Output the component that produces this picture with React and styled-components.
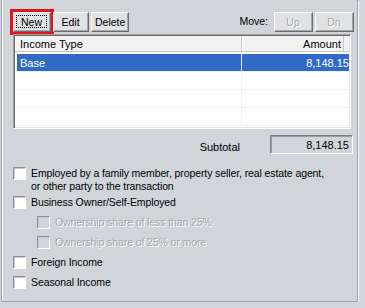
import React from 'react';
import styled, { createGlobalStyle } from 'styled-components';

const incomes = [
    { type: 'Base', amount: '8,148.15' },
    { type: '', amount: '' },
    { type: '', amount: '' },
    { type: '', amount: '' },
];

const options = [
    { label: 'Employed by a family member, property seller, real estate agent, or other party to the transaction', height: 29 },
    { label: 'Business Owner/Self-Employed' },
    { label: 'Ownership share of less than 25%', sub: true, disabled: true },
    { label: 'Ownership share of 25% or more', sub: true, disabled: true },
    { label: 'Foreign Income' },
    { label: 'Seasonal Income' },
];

const App = () => {
    return (
        <>
            <GlobalStyle />
            <Frame>
                <Toolbar>
                    <ButtonGroup>
                        <Button $w={38} $marked>
                            <Focus $focused>New</Focus>
                        </Button>
                        <Button $w={36}><Focus>Edit</Focus></Button>
                        <Button $w={38}><Focus>Delete</Focus></Button>
                    </ButtonGroup>
                    <MoveGroup>
                        <MoveLabel>Move:</MoveLabel>
                        <Button $w={39} disabled><Focus>Up</Focus></Button>
                        <Button $w={39} disabled><Focus>Dn</Focus></Button>
                    </MoveGroup>
                </Toolbar>

                <ListView>
                    <HeaderRow>
                        <HeaderCell>Income Type</HeaderCell>
                        <HeaderCell $right>Amount</HeaderCell>
                    </HeaderRow>
                    <Rows>
                        {incomes.map((item, i) => (
                            <Row key={i} $selected={i === 0}>
                                <Cell>{item.type}</Cell>
                                <Cell $right>{item.amount}</Cell>
                            </Row>
                        ))}
                    </Rows>
                </ListView>

                <SubtotalRow>
                    <SubtotalLabel>Subtotal</SubtotalLabel>
                    <SubtotalField>8,148.15</SubtotalField>
                </SubtotalRow>

                <Checks>
                    {options.map((o) => (
                        <CheckRow key={o.label} $h={o.height} $sub={o.sub}>
                            <Box $disabled={o.disabled} />
                            <CheckLabel $disabled={o.disabled}>{o.label}</CheckLabel>
                        </CheckRow>
                    ))}
                </Checks>
            </Frame>
        </>
    )
};

const GlobalStyle = createGlobalStyle`
    html, body {
        margin: 0;
        background: #d1d5d9;
        font-family: "Liberation Sans", Arial, sans-serif;
        font-size: 11px;
        color: #000;
        overflow: hidden;
    }
`;

const Frame = styled.div`
    margin-left: 1px;
    width: 355px;
    height: 301px;
    border: 1px solid #9ea2a6;
    border-top: none;
    box-shadow: inset 1px 0 0 #fff, 1px 1px 0 #fff;
    display: flex;
    flex-direction: column;
`;

const Toolbar = styled.div`
    display: flex;
    justify-content: space-between;
    align-items: center;
    padding: 12px 3px 0 11px;
`;

const ButtonGroup = styled.div`
    display: flex;
    gap: 2px;
`;

const MoveGroup = styled.div`
    display: flex;
    align-items: center;
    gap: 2px;
`;

const MoveLabel = styled.span`
    margin-right: 4px;
    padding-bottom: 3px;
    font-size: 10.5px;
`;

const Button = styled.button`
    width: ${p => p.$w}px;
    height: 20px;
    padding: 0;
    margin: 0;
    background: #e1e2e3;
    border: 1px solid;
    border-color: #fff #6c6c6c #6c6c6c #fff;
    box-shadow: inset -1px -1px 0 #a3a6a9;
    font: inherit;
    font-size: 10.5px;
    color: #000;
    display: flex;
    outline: ${p => p.$marked ? '3px solid #e3151c' : 'none'};

    &:disabled {
        color: #a4a7aa;
        text-shadow: 1px 1px 0 #fff;
    }
`;

const Focus = styled.span`
    flex: 1;
    margin: 2px 3px 3px 2px;
    border: 1px dotted ${p => p.$focused ? '#000' : 'transparent'};
    display: flex;
    align-items: center;
    justify-content: center;
`;

const ListView = styled.div`
    margin: 2px 0 0 11px;
    width: 334px;
    height: 91px;
    border: 1px solid;
    border-color: #a0a0a0 #fff #fff #a0a0a0;
    box-shadow: inset 1px 1px 0 #696969, inset -1px -1px 0 #e3e3e3;
    padding: 1px;
    background: #fff;
    overflow: hidden;
`;

const HeaderRow = styled.div`
    display: grid;
    grid-template-columns: 227px 102px 1fr;
    height: 15px;
    background: #f2f2f2;
    border-bottom: 1px solid #c7c7c7;
`;

const HeaderCell = styled.div`
    display: flex;
    align-items: center;
    justify-content: ${p => p.$right ? 'flex-end' : 'flex-start'};
    padding: 0 ${p => p.$right ? '2px' : '0'} 0 5px;
    border-right: 1px solid #c7c7c7;
    box-shadow: inset 1px 0 0 #fff;
`;

const Rows = styled.div`
    padding-top: 2px;
`;

const Row = styled.div`
    display: grid;
    grid-template-columns: 225px 1fr;
    margin-left: 2px;
    height: 17px;
    border-bottom: 1px solid #f0f0f0;
    background: ${p => p.$selected ? '#316ac5' : '#fff'};
    color: ${p => p.$selected ? '#fff' : '#000'};
`;

const Cell = styled.div`
    display: flex;
    align-items: center;
    justify-content: ${p => p.$right ? 'flex-end' : 'flex-start'};
    padding-left: ${p => p.$right ? '0' : '3px'};
    border-right: ${p => p.$right ? 'none' : '1px solid #f0f0f0'};
`;

const SubtotalRow = styled.div`
    display: flex;
    justify-content: flex-end;
    align-items: flex-end;
    gap: 30px;
    margin: 6px 4px 0 0;
`;

const SubtotalLabel = styled.span`
    padding-bottom: 1px;
`;

const SubtotalField = styled.div`
    width: 78px;
    height: 17px;
    border: 1px solid;
    border-color: #7c7f82 #fff #fff #7c7f82;
    box-shadow: inset 1px 1px 0 #9a9da0;
    padding-right: 3px;
    display: flex;
    align-items: center;
    justify-content: flex-end;
`;

const Checks = styled.div`
    display: flex;
    flex-direction: column;
    margin-top: 13px;
    padding-left: 11px;
`;

const CheckRow = styled.div`
    display: flex;
    align-items: flex-start;
    gap: 5px;
    height: ${p => p.$h || 20}px;
    padding-left: ${p => p.$sub ? 24 : 0}px;
`;

const Box = styled.span`
    flex: none;
    width: 11px;
    height: 11px;
    border: 1px solid;
    border-color: #8d9094 #fff #fff #8d9094;
    box-shadow: inset 1px 1px 0 #c8cacc;
    background: ${p => p.$disabled ? '#d1d5d9' : '#fff'};
`;

const CheckLabel = styled.span`
    font-size: 10.5px;
    letter-spacing: -0.1px;
    line-height: 13px;
    max-width: 296px;
    color: ${p => p.$disabled ? '#a4a7aa' : '#000'};
    text-shadow: ${p => p.$disabled ? '1px 1px 0 #fff' : 'none'};
`;

export default App;
